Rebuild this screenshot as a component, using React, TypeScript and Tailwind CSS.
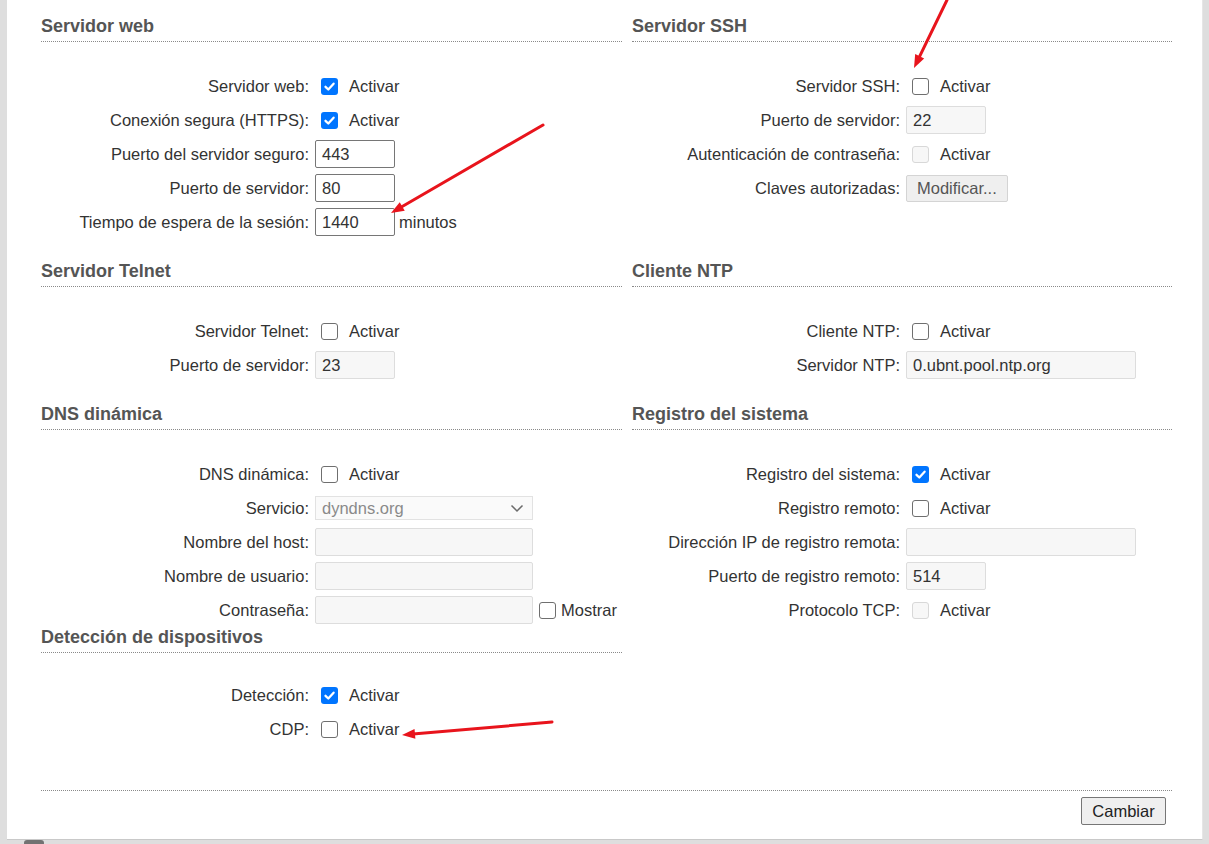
import React from 'react';

type CheckProps = { checked?: boolean; disabled?: boolean; className?: string };

const Check: React.FC<CheckProps> = ({ checked, disabled, className = 'ml-[6px] mr-[11px]' }) => {
  if (checked) {
    return (
      <span className={`w-[17px] h-[17px] shrink-0 rounded-[3px] bg-[#0075ff] flex items-center justify-center ${className}`}>
        <svg width="13" height="13" viewBox="0 0 12 12" fill="none">
          <path d="M2.3 6.3 4.9 8.8 9.8 3.4" stroke="white" strokeWidth="2.1" strokeLinecap="round" strokeLinejoin="round" />
        </svg>
      </span>
    );
  }
  return (
    <span
      className={`w-[17px] h-[17px] shrink-0 rounded-[3px] border ${
        disabled ? 'border-[#d8d8d8] bg-[#f7f7f7]' : 'border-[#6f6f6f] bg-white'
      } ${className}`}
    />
  );
};

const Row: React.FC<{ label: string; children: React.ReactNode }> = ({ label, children }) => (
  <div className="flex items-center h-[34px]">
    <div className="w-[274px] shrink-0 pr-[6px] text-right whitespace-nowrap">{label}</div>
    <div className="flex items-center whitespace-nowrap">{children}</div>
  </div>
);

const Input: React.FC<{ value?: string; disabled?: boolean; width?: string }> = ({ value = '', disabled, width = 'w-[80px]' }) => (
  <div
    className={`${width} h-[28px] px-[6px] flex items-center rounded-[2px] border ${
      disabled ? 'border-[#dddddd] bg-[#f7f7f7]' : 'border-[#767676] bg-white'
    }`}
  >
    {value}
  </div>
);

const Activar: React.FC<{ checked?: boolean; disabled?: boolean }> = ({ checked, disabled }) => (
  <>
    <Check checked={checked} disabled={disabled} />
    <span>Activar</span>
  </>
);

const Section: React.FC<{ title: string; mb: string; mt?: string; children: React.ReactNode }> = ({ title, mb, mt = 'mt-[27px]', children }) => (
  <div className={mb}>
    <h3 className="text-[18px] leading-[20px] font-bold text-[#555] pb-[5px] border-b border-dotted border-[#8a8a8a]">{title}</h3>
    <div className={mt}>{children}</div>
  </div>
);

type Arrow = { x1: number; y1: number; x2: number; y2: number };

const arrows: Arrow[] = [
  { x1: 543, y1: 125, x2: 391, y2: 213 },
  { x1: 947, y1: 0, x2: 914, y2: 68 },
  { x1: 552, y1: 722, x2: 402, y2: 735 },
];

const head = (a: Arrow) => {
  const dx = a.x2 - a.x1;
  const dy = a.y2 - a.y1;
  const len = Math.hypot(dx, dy);
  const ux = dx / len;
  const uy = dy / len;
  const bx = a.x2 - 13 * ux;
  const by = a.y2 - 13 * uy;
  const px = uy * 5;
  const py = -ux * 5;
  return {
    line: { x2: bx + 2 * ux, y2: by + 2 * uy },
    points: `${a.x2},${a.y2} ${bx + px},${by + py} ${bx - px},${by - py}`,
  };
};

export default function App() {
  return (
    <div className="relative w-[1209px] h-[844px] bg-[#dedede] overflow-hidden font-['Liberation_Sans',Arial,sans-serif] text-[16.5px] text-[#333]">
      <div className="ml-[7px] mr-[6px] h-[840px] bg-white border-b border-[#c9c9c9] border-r border-r-[#e6e6e6] pl-[34px] pt-[16px]">
        <div className="grid grid-cols-[581px_540px] gap-x-[10px]">
          {/* Servidor web */}
          <Section title="Servidor web" mb="mb-[22px]">
            <Row label="Servidor web:"><Activar checked /></Row>
            <Row label="Conexión segura (HTTPS):"><Activar checked /></Row>
            <Row label="Puerto del servidor seguro:"><Input value="443" /></Row>
            <Row label="Puerto de servidor:"><Input value="80" /></Row>
            <Row label="Tiempo de espera de la sesión:">
              <Input value="1440" />
              <span className="ml-[4px]">minutos</span>
            </Row>
          </Section>

          {/* Servidor SSH */}
          <Section title="Servidor SSH" mb="mb-[22px]">
            <Row label="Servidor SSH:"><Activar /></Row>
            <Row label="Puerto de servidor:"><Input value="22" disabled /></Row>
            <Row label="Autenticación de contraseña:"><Activar disabled /></Row>
            <Row label="Claves autorizadas:">
              <button className="h-[27px] px-[10px] bg-[#efefef] border border-[#d4d4d4] rounded-[2px] text-[#555]">Modificar...</button>
            </Row>
          </Section>

          <Section title="Servidor Telnet" mb="mb-[22px]">
            <Row label="Servidor Telnet:"><Activar /></Row>
            <Row label="Puerto de servidor:"><Input value="23" disabled /></Row>
          </Section>

          <Section title="Cliente NTP" mb="mb-[22px]">
            <Row label="Cliente NTP:"><Activar /></Row>
            <Row label="Servidor NTP:"><Input value="0.ubnt.pool.ntp.org" disabled width="w-[230px]" /></Row>
          </Section>

          <Section title="DNS dinámica" mb="mb-0">
            <Row label="DNS dinámica:"><Activar /></Row>
            <Row label="Servicio:">
              <div className="w-[218px] h-[24px] pl-[6px] pr-[8px] flex items-center justify-between border border-[#e2e2e2] bg-[#fafafa] text-[#8a8a8a]">
                <span>dyndns.org</span>
                <svg width="14" height="9" viewBox="0 0 14 9" fill="none">
                  <path d="M1.5 1.5 7 7 12.5 1.5" stroke="#6b6b6b" strokeWidth="1.5" />
                </svg>
              </div>
            </Row>
            <Row label="Nombre del host:"><Input disabled width="w-[218px]" /></Row>
            <Row label="Nombre de usuario:"><Input disabled width="w-[218px]" /></Row>
            <Row label="Contraseña:">
              <Input disabled width="w-[218px]" />
              <Check className="ml-[6px] mr-[5px]" />
              <span>Mostrar</span>
            </Row>
          </Section>

          <Section title="Registro del sistema" mb="mb-0">
            <Row label="Registro del sistema:"><Activar checked /></Row>
            <Row label="Registro remoto:"><Activar /></Row>
            <Row label="Dirección IP de registro remota:"><Input disabled width="w-[230px]" /></Row>
            <Row label="Puerto de registro remoto:"><Input value="514" disabled /></Row>
            <Row label="Protocolo TCP:"><Activar disabled /></Row>
          </Section>

          <Section title="Detección de dispositivos" mb="mb-0" mt="mt-[25px]">
            <Row label="Detección:"><Activar checked /></Row>
            <Row label="CDP:"><Activar /></Row>
          </Section>
          <div />
        </div>

        <div className="w-[1131px] mt-[44px] border-t border-dotted border-[#8a8a8a] flex justify-end pr-[6px] pt-[6px]">
          <button className="h-[28px] w-[85px] bg-[#efefef] border border-[#767676] rounded-[2px] text-[#222]">Cambiar</button>
        </div>
      </div>

      <div className="absolute left-[24px] top-[840px] w-[20px] h-[6px] rounded-full bg-[#444] opacity-70" />

      <svg className="absolute inset-0 pointer-events-none" width="1209" height="844">
        {arrows.map((a, i) => {
          const h = head(a);
          return (
            <g key={i}>
              <line x1={a.x1} y1={a.y1} x2={h.line.x2} y2={h.line.y2} stroke="#e8141c" strokeWidth="3" strokeLinecap="round" />
              <polygon points={h.points} fill="#e8141c" />
            </g>
          );
        })}
      </svg>
    </div>
  );
}
